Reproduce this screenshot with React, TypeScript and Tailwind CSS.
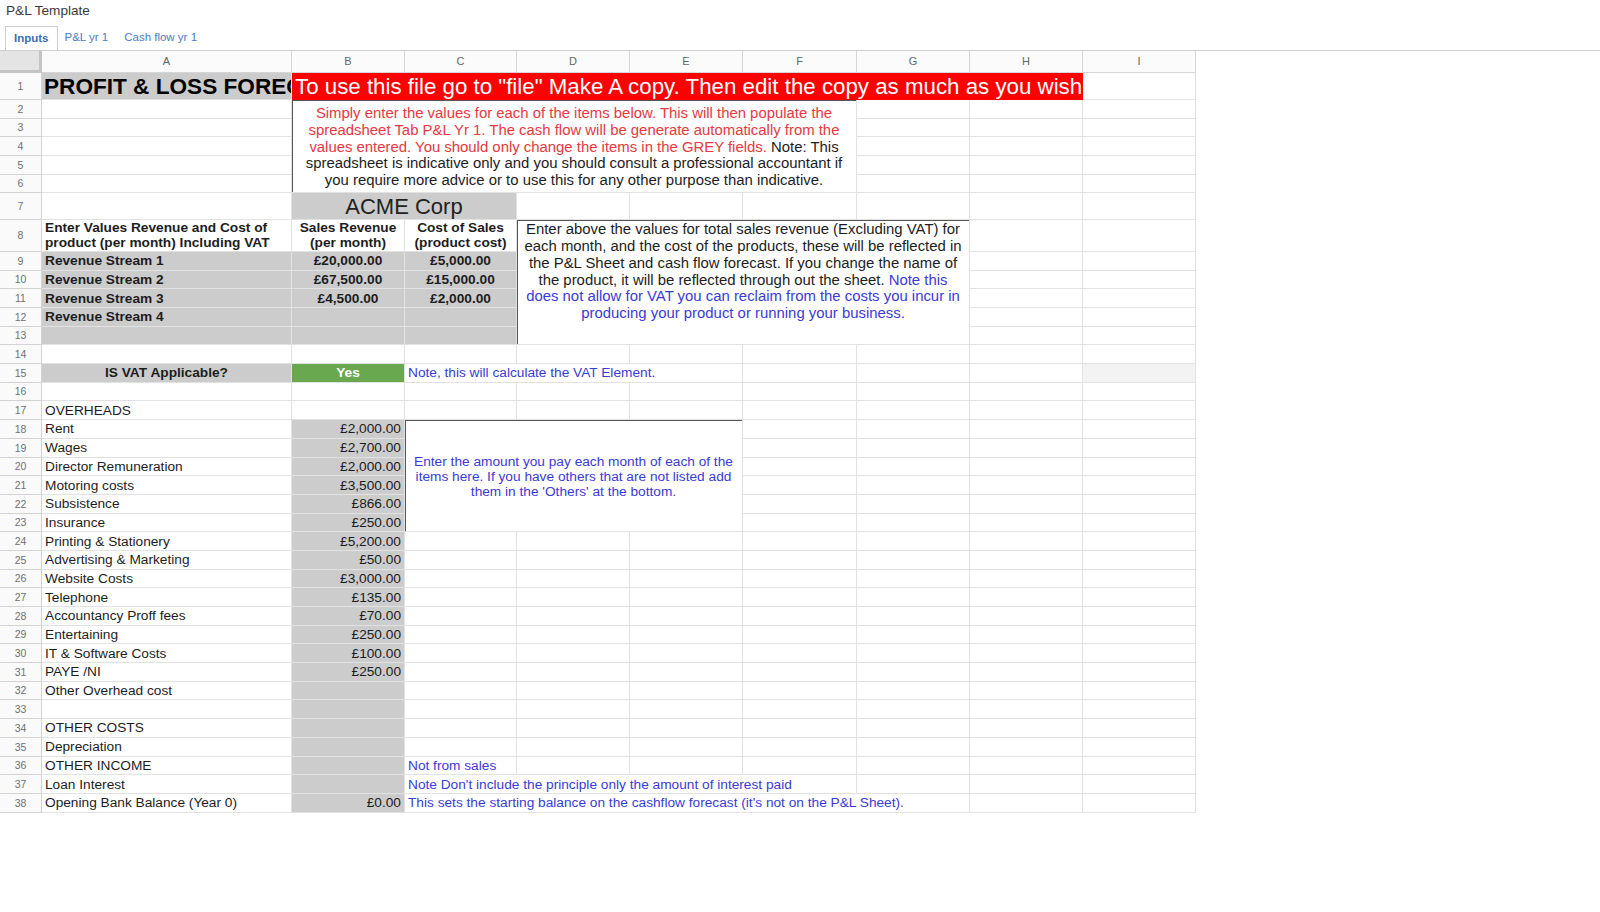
import React from "react";

const overheads: [string, string][] = [
  ["Rent", "£2,000.00"],
  ["Wages", "£2,700.00"],
  ["Director Remuneration", "£2,000.00"],
  ["Motoring costs", "£3,500.00"],
  ["Subsistence", "£866.00"],
  ["Insurance", "£250.00"],
  ["Printing & Stationery", "£5,200.00"],
  ["Advertising & Marketing", "£50.00"],
  ["Website Costs", "£3,000.00"],
  ["Telephone", "£135.00"],
  ["Accountancy Proff fees", "£70.00"],
  ["Entertaining", "£250.00"],
  ["IT & Software Costs", "£100.00"],
  ["PAYE /NI", "£250.00"],
  ["Other Overhead cost", ""],
  ["", ""],
  ["OTHER COSTS", ""],
  ["Depreciation", ""],
];

const streams = [
  ["Revenue Stream 1", "£20,000.00", "£5,000.00"],
  ["Revenue Stream 2", "£67,500.00", "£15,000.00"],
  ["Revenue Stream 3", "£4,500.00", "£2,000.00"],
  ["Revenue Stream 4", "", ""],
  ["", "", ""],
];

const cols = ["A", "B", "C", "D", "E", "F", "G", "H", "I"];

interface CellProps {
  className?: string;
  children?: React.ReactNode;
}

const Cell = ({ className = "", children }: CellProps) => (
  <div
    className={`min-w-0 flex items-center whitespace-nowrap px-[3px] pt-[1.5px] border-r border-b border-[#e2e2e2] text-[13.7px] text-[#1d1d1d] ${className}`}
  >
    {children}
  </div>
);

const Blank = ({ n }: { n: number }) => (
  <>
    {Array.from({ length: n }).map((_, i) => (
      <Cell key={i} />
    ))}
  </>
);

const RowNum = ({ n }: { n: number }) => (
  <div className="flex items-center justify-center pt-[1.5px] border-r border-b border-[#d3d3d3] bg-[#fafafa] text-[10.5px] text-[#707070]">
    {n}
  </div>
);

const box = "items-center border-r border-b border-[#555] shadow-[inset_1px_1px_0_#555] whitespace-normal";
const grey = "bg-[#cccccc]";
const blue = "text-[#3b3bd6]";

export default function App() {
  return (
    <div className="w-[1600px] h-[912px] overflow-hidden bg-white font-['Liberation_Sans',Arial,sans-serif]">
      <div className="h-[26px] pl-[6px] pb-[3px] flex items-center text-[13.6px] text-[#3a3a3a]">P&amp;L Template</div>

      <div className="h-[25px] pl-[5px] flex items-end border-b border-[#d0d0d0] text-[11.5px]">
        <div className="h-full px-[8px] flex items-center border-t border-l border-r border-[#cfcfcf] bg-white font-bold text-[#3a6cb3]">
          Inputs
        </div>
        <div className="h-full px-[7px] flex items-center text-[#4a7cc2]">P&amp;L yr 1</div>
        <div className="h-full px-[9px] flex items-center text-[#4a7cc2]">Cash flow yr 1</div>
      </div>

      <div className="grid w-[1196px] grid-cols-[42px_250px_113px_112px_113px_113px_114px_113px_113px_113px] grid-rows-[22px_27px_repeat(5,18.7px)_26.5px_32px_repeat(30,18.7px)]">
        {/* column headers */}
        <div className="bg-[#e4e4e4] border-r-[3px] border-b-[3px] border-[#c4c4c4]" />
        {cols.map((c) => (
          <div
            key={c}
            className="flex items-center justify-center border-r border-b border-[#d6d6d6] bg-[#fbfbfb] text-[11px] text-[#666]"
          >
            {c}
          </div>
        ))}

        {/* row 1 */}
        <RowNum n={1} />
        <Cell className={`${grey} overflow-hidden pl-[2px] pt-0 text-[22.6px] font-bold text-black`}>PROFIT &amp; LOSS FORECAST</Cell>
        <Cell className="col-span-7 overflow-hidden pt-0 bg-[#ff0000] border-[#ff0000] text-[22.3px] text-white">
          To use this file go to "file" Make A copy. Then edit the copy as much as you wish
        </Cell>
        <Cell />

        {/* rows 2-6 */}
        <RowNum n={2} />
        <Cell />
        <Cell className={`col-span-5 row-span-5 flex-col justify-center pt-0 text-center text-[14.9px] leading-[16.8px] text-[#e53a3f] ${box}`}>
          <p>
            Simply enter the values for each of the items below. This will then populate the
            <br />
            spreadsheet Tab P&amp;L Yr 1. The cash flow will be generate automatically from the
            <br />
            values entered. You should only change the items in the GREY fields.
            <span className="text-[#1d1d1d]">
              {" "}Note: This
              <br />
              spreadsheet is indicative only and you should consult a professional accountant if
              <br />
              you require more advice or to use this for any other purpose than indicative.
            </span>
          </p>
        </Cell>
        <Blank n={3} />
        {[3, 4, 5, 6].map((n) => (
          <React.Fragment key={n}>
            <RowNum n={n} />
            <Blank n={4} />
          </React.Fragment>
        ))}

        {/* row 7 */}
        <RowNum n={7} />
        <Cell />
        <Cell className={`col-span-2 ${grey} justify-center pt-0 text-[22px] text-[#222]`}>ACME Corp</Cell>
        <Blank n={6} />

        {/* row 8 */}
        <RowNum n={8} />
        <Cell className="whitespace-normal pt-0 pb-[2px] font-bold leading-[15px]">
          Enter Values Revenue and Cost of
          <br />
          product (per month) Including VAT
        </Cell>
        <Cell className="whitespace-normal justify-center pt-0 pb-[2px] text-center font-bold leading-[15px]">
          Sales Revenue
          <br />
          (per month)
        </Cell>
        <Cell className="whitespace-normal justify-center pt-0 pb-[2px] text-center font-bold leading-[15px]">
          Cost of Sales
          <br />
          (product cost)
        </Cell>
        <Cell className={`col-span-4 row-span-6 flex-col justify-start pt-0 text-center text-[14.9px] leading-[16.7px] ${box}`}>
          <p>
            Enter above the values for total sales revenue (Excluding VAT) for
            <br />
            each month, and the cost of the products, these will be reflected in
            <br />
            the P&amp;L Sheet and cash flow forecast. If you change the name of
            <br />
            the product, it will be reflected through out the sheet.
            <span className={blue}>
              {" "}Note this
              <br />
              does not allow for VAT you can reclaim from the costs you incur in
              <br />
              producing your product or running your business.
            </span>
          </p>
        </Cell>
        <Blank n={2} />

        {/* rows 9-13 */}
        {streams.map(([name, rev, cost], i) => (
          <React.Fragment key={i}>
            <RowNum n={9 + i} />
            <Cell className={`${grey} font-bold`}>{name}</Cell>
            <Cell className={`${grey} justify-center font-bold`}>{rev}</Cell>
            <Cell className={`${grey} justify-center font-bold`}>{cost}</Cell>
            <Blank n={2} />
          </React.Fragment>
        ))}

        {/* row 14 */}
        <RowNum n={14} />
        <Blank n={9} />

        {/* row 15 */}
        <RowNum n={15} />
        <Cell className={`${grey} justify-center font-bold`}>IS VAT Applicable?</Cell>
        <Cell className="bg-[#6aa84f] justify-center font-bold text-white">Yes</Cell>
        <Cell className={`col-span-3 ${blue}`}>Note, this will calculate the VAT Element.</Cell>
        <Blank n={3} />
        <Cell className="bg-[#f3f3f3]" />

        {/* rows 16-17 */}
        <RowNum n={16} />
        <Blank n={9} />
        <RowNum n={17} />
        <Cell>OVERHEADS</Cell>
        <Blank n={8} />

        {/* rows 18-35 */}
        {overheads.map(([label, value], i) => {
          const n = 18 + i;
          return (
            <React.Fragment key={n}>
              <RowNum n={n} />
              <Cell>{label}</Cell>
              <Cell className={`${grey} justify-end pr-[3px]`}>{value}</Cell>
              {n === 18 && (
                <Cell className={`col-span-3 row-span-6 flex-col justify-center pt-[2px] text-center leading-[15px] ${blue} ${box}`}>
                  <p>
                    Enter the amount you pay each month of each of the
                    <br />
                    items here. If you have others that are not listed add
                    <br />
                    them in the 'Others' at the bottom.
                  </p>
                </Cell>
              )}
              <Blank n={n <= 23 ? 4 : 7} />
            </React.Fragment>
          );
        })}

        {/* row 36 */}
        <RowNum n={36} />
        <Cell>OTHER INCOME</Cell>
        <Cell className={grey} />
        <Cell className={blue}>Not from sales</Cell>
        <Blank n={6} />

        {/* row 37 */}
        <RowNum n={37} />
        <Cell>Loan Interest</Cell>
        <Cell className={grey} />
        <Cell className={`col-span-4 ${blue}`}>Note Don't include the principle only the amount of interest paid</Cell>
        <Blank n={3} />

        {/* row 38 */}
        <RowNum n={38} />
        <Cell>Opening Bank Balance (Year 0)</Cell>
        <Cell className={`${grey} justify-end pr-[3px]`}>£0.00</Cell>
        <Cell className={`col-span-5 ${blue}`}>
          This sets the starting balance on the cashflow forecast (it's not on the P&amp;L Sheet).
        </Cell>
        <Blank n={2} />
      </div>
    </div>
  );
}
